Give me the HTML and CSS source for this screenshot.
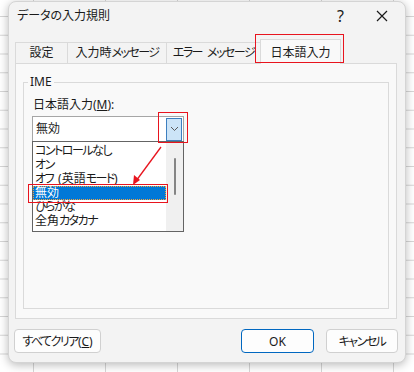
FILE: index.html
```html
<!DOCTYPE html>
<html lang="ja">
<head>
  <meta charset="UTF-8">
  <title>データの入力規則</title>
  <link rel="stylesheet" href="styles.css">
</head>
<body>
  <div class="dialog">
    <div class="title-bar">
      <span class="title">データの入力規則</span>
      <span class="help">?</span>
      <svg class="close" width="12" height="12" viewBox="0 0 12 12">
        <path d="M1 1 L11 11 M11 1 L1 11" stroke="#1a1a1a" stroke-width="1.2" fill="none"/>
      </svg>
    </div>

    <div class="tabs">
      <div class="tab tab-1">設定</div>
      <div class="tab tab-2">入力時<span class="k">メッセージ</span></div>
      <div class="tab tab-3"><span class="k gap">エラー</span><span class="k">メッセージ</span></div>
      <div class="tab tab-4 active">日本語入力</div>
    </div>

    <div class="panel">
      <fieldset class="group">
        <legend>IME</legend>
        <div class="field-label">日本語入力(<u>M</u>):</div>
        <div class="combo">
          <span class="combo-value">無効</span>
          <span class="combo-btn">
            <svg width="9" height="6" viewBox="0 0 9 6">
              <path d="M1 1 L4.5 4.5 L8 1" stroke="#5a5a5a" stroke-width="1" fill="none"/>
            </svg>
          </span>
          <div class="list">
            <div class="item k">コントロールなし</div>
            <div class="item k">オン</div>
            <div class="item"><span class="k gap">オフ</span>(英語<span class="k">モード</span>)</div>
            <div class="item selected">無効</div>
            <div class="item k">ひらがな</div>
            <div class="item">全角<span class="k">カタカナ</span></div>
            <div class="scrollbar"><div class="thumb"></div></div>
          </div>
        </div>
      </fieldset>
    </div>

    <div class="buttons">
      <button class="btn btn-clear"><span class="k">すべてクリア</span>(<u>C</u>)</button>
      <div class="spacer"></div>
      <button class="btn btn-ok">OK</button>
      <button class="btn btn-cancel"><span class="k">キャンセル</span></button>
    </div>
  </div>

  <!-- red annotations -->
  <div class="mark mark-tab"></div>
  <div class="mark mark-btn"></div>
  <div class="mark mark-item"></div>
  <svg class="arrow" width="414" height="372" viewBox="0 0 414 372">
    <line x1="161" y1="147" x2="136" y2="181" stroke="#e8141e" stroke-width="1.3"/>
    <polygon points="133,185 134,175 140,180" fill="#e8141e"/>
  </svg>
</body>
</html>
```

FILE: styles.css
```css
* {
  margin: 0;
  padding: 0;
  box-sizing: border-box;
}

/* Spreadsheet behind the dialog */
body {
  width: 414px;
  height: 372px;
  position: relative;
  overflow: hidden;
  font-family: "Noto Sans", "Noto Sans CJK JP", sans-serif;
  font-size: 12px;
  font-feature-settings: "palt";
  color: #1a1a1a;
  background-color: #fff;
  background-image:
    linear-gradient(to right, #d6d6d6 1px, transparent 1px),
    linear-gradient(#d6d6d6 1px, transparent 1px);
  background-size: 72px 100%, 100% 18.75px;
  background-position: 33px 0, 0 16px;
}

/* kana runs are narrower in the Windows UI font */
.k {
  letter-spacing: -1.5px;
}
.k.gap {
  margin-right: 5px;
}

/* Dialog window */
.dialog {
  position: absolute;
  left: 8px;
  top: 1px;
  width: 398px;
  height: 362px;
  background: #f3f3f3;
  border: 1px solid #d4d4d4;
  border-radius: 8px;
  box-shadow: 0 2px 10px rgba(0, 0, 0, 0.28);
  display: flex;
  flex-direction: column;
}

.title-bar {
  height: 31px;
  display: flex;
  align-items: center;
  padding: 0 0 4px 8px;
}
.title {
  flex: 1;
  line-height: 14px;
}
.help {
  font-size: 16px;
  margin-right: 32px;
}
.close {
  margin-right: 17px;
}

/* Tabs */
.tabs {
  margin-top: 5px;
  height: 25px;
  display: flex;
  align-items: flex-end;
  padding-left: 6px;
}
.tab {
  height: 21px;
  line-height: 20px;
  text-align: center;
  white-space: nowrap;
  border: 1px solid #dadada;
  border-bottom: none;
  border-right: none;
  background: #f3f3f3;
}
.tab-1 { width: 52px; }
.tab-2 { width: 99px; }
.tab-3 { width: 94px; }
.tab.active {
  width: 81px;
  height: 25px;
  line-height: 26px;
  background: #f9f9f9;
  border-right: 1px solid #dadada;
  position: relative;
  top: 1px;
}

/* Tab page */
.panel {
  margin-left: 6px;
  width: 382px;
  height: 256px;
  background: #f9f9f9;
  border: 1px solid #dadada;
  padding: 11px 7px 9px 7px;
}
.group {
  height: 100%;
  border: 1px solid #dadada;
  padding: 9px 8px 0 9px;
}
.group legend {
  margin-left: -5px;
  padding: 0 2px;
  line-height: 14px;
}
.field-label {
  line-height: 14px;
}
.field-label u {
  text-underline-offset: 1px;
}

/* Combo box */
.combo {
  position: relative;
  margin-top: 4px;
  margin-left: -1px;
  width: 152px;
  height: 26px;
  background: #fff;
  border: 1px solid #a6a6a6;
  display: flex;
  align-items: center;
  padding-left: 3px;
}
.combo-value {
  flex: 1;
  line-height: 14px;
}
.combo-btn {
  width: 16px;
  height: 23px;
  margin-right: 1px;
  background: #cce4f7;
  border: 1px solid #3d7fbf;
  display: flex;
  align-items: center;
  justify-content: center;
}

/* Open drop-down list */
.list {
  position: absolute;
  left: -1px;
  top: 24px;
  width: 152px;
  height: 91px;
  background: #fff;
  border: 1px solid #646464;
  padding-top: 2px;
}
.item {
  width: 133px;
  height: 14px;
  line-height: 14px;
  padding-left: 2px;
  white-space: nowrap;
}
.item.selected {
  background: #0078d7;
  color: #fff;
  outline: 1px dotted #f2a23c;
  outline-offset: -1px;
}
.scrollbar {
  position: absolute;
  top: 0;
  right: 0;
  width: 17px;
  height: 100%;
  background: #f0f0f0;
}
.thumb {
  position: absolute;
  left: 8px;
  top: 16px;
  width: 2px;
  height: 37px;
  border-radius: 1px;
  background: #858585;
}

/* Bottom buttons */
.buttons {
  margin-top: 10px;
  padding: 0 7px 0 5px;
  display: flex;
  align-items: center;
}
.spacer {
  flex: 1;
}
.btn {
  height: 24px;
  font-family: inherit;
  font-size: 12px;
  font-feature-settings: "palt";
  color: #1a1a1a;
  background: #fdfdfd;
  border: 1px solid #d0d0d0;
  border-radius: 4px;
}
.btn-clear { width: 87px; }
.btn-ok {
  width: 73px;
  border-color: #0067c0;
  margin-right: 12px;
}
.btn-cancel { width: 72px; }

/* Red annotations */
.mark {
  position: absolute;
  border: 1.5px solid #e8141e;
}
.mark-tab {
  left: 255px;
  top: 34px;
  width: 89px;
  height: 29px;
}
.mark-btn {
  left: 158px;
  top: 112px;
  width: 30px;
  height: 31px;
}
.mark-item {
  left: 28px;
  top: 184px;
  width: 140px;
  height: 19px;
}
.arrow {
  position: absolute;
  left: 0;
  top: 0;
  pointer-events: none;
}
```
